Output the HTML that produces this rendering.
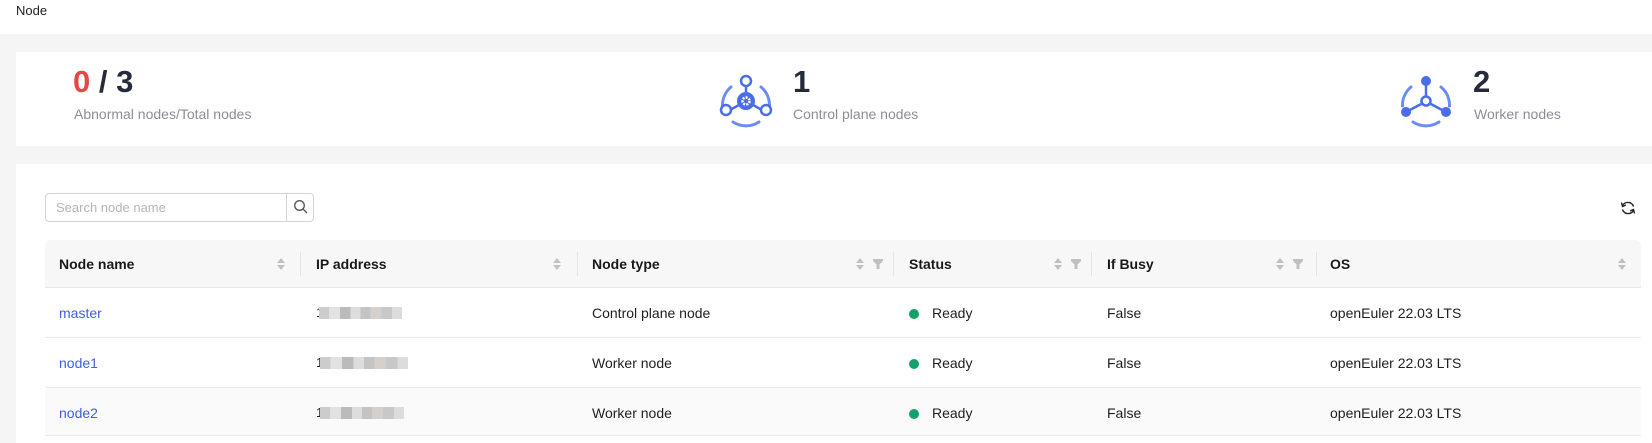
<!DOCTYPE html>
<html><head><meta charset="utf-8"><style>
*{box-sizing:border-box;margin:0;padding:0}
body{width:1652px;height:443px;overflow:hidden;background:#f5f5f5;font-family:"Liberation Sans",sans-serif;font-size:14px;color:#1f1f1f;position:relative}
.abs{position:absolute}
.top{left:0;top:0;width:1652px;height:34px;background:#fff}
.card{left:16px;top:52px;width:1636px;height:94px;background:#fff}
.tcard{left:16px;top:164px;width:1636px;height:279px;background:#fff}
.num{font-size:31px;font-weight:bold;color:#252b3a}
.lbl{font-size:14px;color:#8a8e99}
.th{font-weight:bold;font-size:14px;color:#191919}
.div{width:1px;height:24px;background:#e6e6e6;top:252px}
.sort{width:8px;height:12px}
.link{color:#3f5fe0}
.blur{height:12px;background:linear-gradient(90deg,#ccc 0 12%,#e2e2e2 12% 25%,#bbb 25% 38%,#ddd 38% 50%,#c4c4c4 50% 62%,#d6d0cc 62% 75%,#c8c8c8 75% 88%,#dcdcdc 88%)}
.dot{width:10px;height:10px;border-radius:50%;background:#14a06b}
</style></head><body>
<div class="abs top"></div>
<div class="abs" style="left:16px;top:3px;font-size:13px">Node</div>
<div class="abs card"></div>
<div class="abs num" style="left:73px;top:64px"><span style="color:#e84545">0</span> / 3</div>
<div class="abs lbl" style="left:74px;top:106px">Abnormal nodes/Total nodes</div>

<svg class="abs" style="left:718px;top:73px" width="56" height="56" viewBox="0 0 56 56">
<g fill="none" stroke="#6b8cf3" stroke-width="3" stroke-linecap="round">
<path d="M13 14 A24 24 0 0 0 4.5 33"/><path d="M43 14 A24 24 0 0 1 51.5 33"/><path d="M15 49 A24 24 0 0 0 41 49"/>
</g>
<g stroke="#4b6ee8" stroke-width="2.5"><line x1="28" y1="13" x2="28" y2="28"/><line x1="28" y1="28" x2="12" y2="37"/><line x1="28" y1="28" x2="44" y2="37"/></g>
<circle cx="28" cy="8" r="5" fill="#fff" stroke="#4b6ee8" stroke-width="2.5"/>
<circle cx="8" cy="37" r="5" fill="#fff" stroke="#4b6ee8" stroke-width="2.5"/>
<circle cx="48" cy="37" r="5" fill="#fff" stroke="#4b6ee8" stroke-width="2.5"/>
<circle cx="28" cy="28" r="9" fill="#4b6ee8"/>
<circle cx="28" cy="28" r="3.5" fill="none" stroke="#fff" stroke-width="2.5" stroke-dasharray="2 1.2"/>
</svg>
<div class="abs num" style="left:793px;top:64px">1</div>
<div class="abs lbl" style="left:793px;top:106px">Control plane nodes</div>

<svg class="abs" style="left:1398px;top:73px" width="56" height="56" viewBox="0 0 56 56">
<g fill="none" stroke="#6b8cf3" stroke-width="3" stroke-linecap="round">
<path d="M13 14 A24 24 0 0 0 4.5 33"/><path d="M43 14 A24 24 0 0 1 51.5 33"/><path d="M15 49 A24 24 0 0 0 41 49"/>
</g>
<g stroke="#4b6ee8" stroke-width="2.5"><line x1="28" y1="10" x2="28" y2="24"/><line x1="25" y1="30" x2="10" y2="38"/><line x1="31" y1="30" x2="46" y2="38"/></g>
<circle cx="28" cy="8" r="5" fill="#4b6ee8"/>
<circle cx="8" cy="39" r="5" fill="#4b6ee8"/>
<circle cx="48" cy="39" r="5" fill="#4b6ee8"/>
<circle cx="28" cy="28" r="4.5" fill="#fff" stroke="#4b6ee8" stroke-width="2.5"/>
</svg>
<div class="abs num" style="left:1473px;top:64px">2</div>
<div class="abs lbl" style="left:1474px;top:106px">Worker nodes</div>

<div class="abs tcard"></div>
<div class="abs" style="left:45px;top:193px;width:269px;height:29px;border:1px solid #d4d4d4;border-radius:4px;background:#fff"></div>
<div class="abs" style="left:286px;top:193px;width:1px;height:29px;background:#d4d4d4"></div>
<div class="abs" style="left:56px;top:200px;font-size:13px;color:#b5b5b5">Search node name</div>
<svg class="abs" style="left:293px;top:199px" width="16" height="16" viewBox="0 0 16 16"><circle cx="6.5" cy="6.5" r="4.8" fill="none" stroke="#555" stroke-width="1.3"/><line x1="10" y1="10" x2="14" y2="14" stroke="#555" stroke-width="1.3"/></svg>
<svg class="abs" style="left:1620px;top:200px" width="16" height="16" viewBox="0 0 16 16"><g fill="none" stroke="#222" stroke-width="1.4"><path d="M13.5 6.5 A6 6 0 0 0 2.6 5.5"/><path d="M2.5 9.5 A6 6 0 0 0 13.4 10.5"/></g><path d="M1.5 2.5 L2.5 6.5 L6 5" fill="none" stroke="#222" stroke-width="1.4"/><path d="M14.5 13.5 L13.5 9.5 L10 11" fill="none" stroke="#222" stroke-width="1.4"/></svg>

<div class="abs" style="left:45px;top:240px;width:1596px;height:48px;background:#f7f7f7;border-radius:6px 6px 0 0;border-bottom:1px solid #e8e8e8"></div>
<div class="abs" style="left:45px;top:337px;width:1596px;height:1px;background:#ebebeb"></div>
<div class="abs" style="left:45px;top:387px;width:1596px;height:49px;background:#fafafa;border-top:1px solid #ebebeb;border-bottom:1px solid #ebebeb"></div>

<div class="abs th" style="left:59px;top:256px">Node name</div>
<div class="abs th" style="left:316px;top:256px">IP address</div>
<div class="abs th" style="left:592px;top:256px">Node type</div>
<div class="abs th" style="left:909px;top:256px">Status</div>
<div class="abs th" style="left:1107px;top:256px">If Busy</div>
<div class="abs th" style="left:1330px;top:256px">OS</div>
<div class="abs div" style="left:300px"></div>
<div class="abs div" style="left:577px"></div>
<div class="abs div" style="left:893px"></div>
<div class="abs div" style="left:1091px"></div>
<div class="abs div" style="left:1316px"></div>

<svg width="0" height="0" style="position:absolute"><defs>
<g id="s"><path d="M0 5 L4 0 L8 5Z M0 7 L4 12 L8 7Z" fill="#c0c0c0"/></g>
<g id="f"><path d="M0 0 H10 V2 L6.5 5.5 V10 H3.5 V5.5 L0 2Z" fill="#c0c0c0"/></g>
</defs></svg>
<svg class="abs" style="left:277px;top:258px" width="10" height="12"><use href="#s"/></svg>
<svg class="abs" style="left:553px;top:258px" width="10" height="12"><use href="#s"/></svg>
<svg class="abs" style="left:856px;top:258px" width="10" height="12"><use href="#s"/></svg>
<svg class="abs" style="left:873px;top:259px" width="10" height="10"><use href="#f"/></svg>
<svg class="abs" style="left:1054px;top:258px" width="10" height="12"><use href="#s"/></svg>
<svg class="abs" style="left:1071px;top:259px" width="10" height="10"><use href="#f"/></svg>
<svg class="abs" style="left:1276px;top:258px" width="10" height="12"><use href="#s"/></svg>
<svg class="abs" style="left:1293px;top:259px" width="10" height="10"><use href="#f"/></svg>
<svg class="abs" style="left:1618px;top:258px" width="10" height="12"><use href="#s"/></svg>

<div class="abs link" style="left:59px;top:305px">master</div>
<div class="abs" style="left:316px;top:305px;font-size:13px">1</div><div class="abs blur" style="left:319px;top:307px;width:83px"></div>
<div class="abs" style="left:592px;top:305px">Control plane node</div>
<div class="abs dot" style="left:909px;top:309px"></div><div class="abs" style="left:932px;top:305px">Ready</div>
<div class="abs" style="left:1107px;top:305px">False</div>
<div class="abs" style="left:1330px;top:305px">openEuler 22.03 LTS</div>

<div class="abs link" style="left:59px;top:355px">node1</div>
<div class="abs" style="left:316px;top:355px;font-size:13px">1</div><div class="abs blur" style="left:320px;top:357px;width:88px"></div>
<div class="abs" style="left:592px;top:355px">Worker node</div>
<div class="abs dot" style="left:909px;top:359px"></div><div class="abs" style="left:932px;top:355px">Ready</div>
<div class="abs" style="left:1107px;top:355px">False</div>
<div class="abs" style="left:1330px;top:355px">openEuler 22.03 LTS</div>

<div class="abs link" style="left:59px;top:405px">node2</div>
<div class="abs" style="left:316px;top:405px;font-size:13px">1</div><div class="abs blur" style="left:320px;top:407px;width:84px"></div>
<div class="abs" style="left:592px;top:405px">Worker node</div>
<div class="abs dot" style="left:909px;top:409px"></div><div class="abs" style="left:932px;top:405px">Ready</div>
<div class="abs" style="left:1107px;top:405px">False</div>
<div class="abs" style="left:1330px;top:405px">openEuler 22.03 LTS</div>
</body></html>
